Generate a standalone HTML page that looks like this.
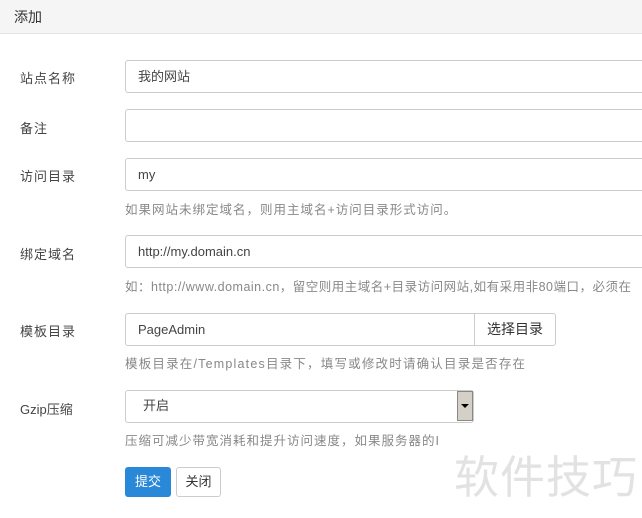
<!DOCTYPE html>
<html><head><meta charset="utf-8"><style>
body{margin:0;width:642px;height:518px;overflow:hidden;background:#fff;font-family:"Liberation Sans","Noto Sans CJK SC",sans-serif;font-size:13px;color:#333;position:relative}
.hd{position:absolute;left:0;top:0;width:642px;height:33px;background:#f5f5f5;border-bottom:1px solid #e5e5e5}
.hd span{position:absolute;left:14px;top:7px;font-size:14px}
.l{position:absolute;left:20px;font-size:13px;color:#444;letter-spacing:1px}
.in{position:absolute;left:125px;width:540px;height:33px;border:1px solid #ccc;border-radius:3px;box-sizing:border-box;padding-left:12px;line-height:31px;color:#444}
.h{position:absolute;left:125px;color:#888;font-size:12.5px;white-space:nowrap;letter-spacing:1px}
.btn{position:absolute;box-sizing:border-box;border-radius:3px;text-align:center}
</style></head><body>
<div class="hd"><span>添加</span></div>
<div class="l" style="top:68px">站点名称</div><div class="in" style="top:60px">我的网站</div>
<div class="l" style="top:118px">备注</div><div class="in" style="top:109px"></div>
<div class="l" style="top:166px">访问目录</div><div class="in" style="top:158px">my</div>
<div class="h" style="top:199px">如果网站未绑定域名，则用主域名+访问目录形式访问。</div>
<div class="l" style="top:244px">绑定域名</div><div class="in" style="top:235px">http://my.domain.cn</div>
<div class="h" style="top:276px;letter-spacing:0.5px">如：http://www.domain.cn，留空则用主域名+目录访问网站,如有采用非80端口，必须在</div>
<div class="l" style="top:321px">模板目录</div><div class="in" style="top:313px;width:350px;border-radius:3px 0 0 3px">PageAdmin</div>
<div class="btn" style="left:474px;top:313px;width:82px;height:33px;border:1px solid #ccc;line-height:31px;font-size:14px;border-radius:0 3px 3px 0">选择目录</div>
<div class="h" style="top:353px;letter-spacing:1.2px">模板目录在/Templates目录下，填写或修改时请确认目录是否存在</div>
<div class="l" style="top:399px;letter-spacing:0">Gzip压缩</div>
<div class="in" style="top:390px;width:349px;padding-left:17px;line-height:30px">开启</div>
<div style="position:absolute;left:457px;top:391px;width:16px;height:30px;background:#d4d0c8;border:1px solid #888;box-sizing:border-box"><div style="position:absolute;left:3px;top:12px;border-left:4px solid transparent;border-right:4px solid transparent;border-top:4px solid #000"></div></div>
<div class="h" style="top:430px">压缩可减少带宽消耗和提升访问速度，如果服务器的I</div>
<div class="btn" style="left:125px;top:467px;width:46px;height:30px;background:#2a88d8;color:#fff;line-height:30px">提交</div>
<div class="btn" style="left:176px;top:467px;width:45px;height:30px;border:1px solid #ccc;line-height:28px">关闭</div>
<div style="position:absolute;left:454px;top:441px;font-size:45px;color:#e2e2e2;letter-spacing:1px">软件技巧</div>
</body></html>
